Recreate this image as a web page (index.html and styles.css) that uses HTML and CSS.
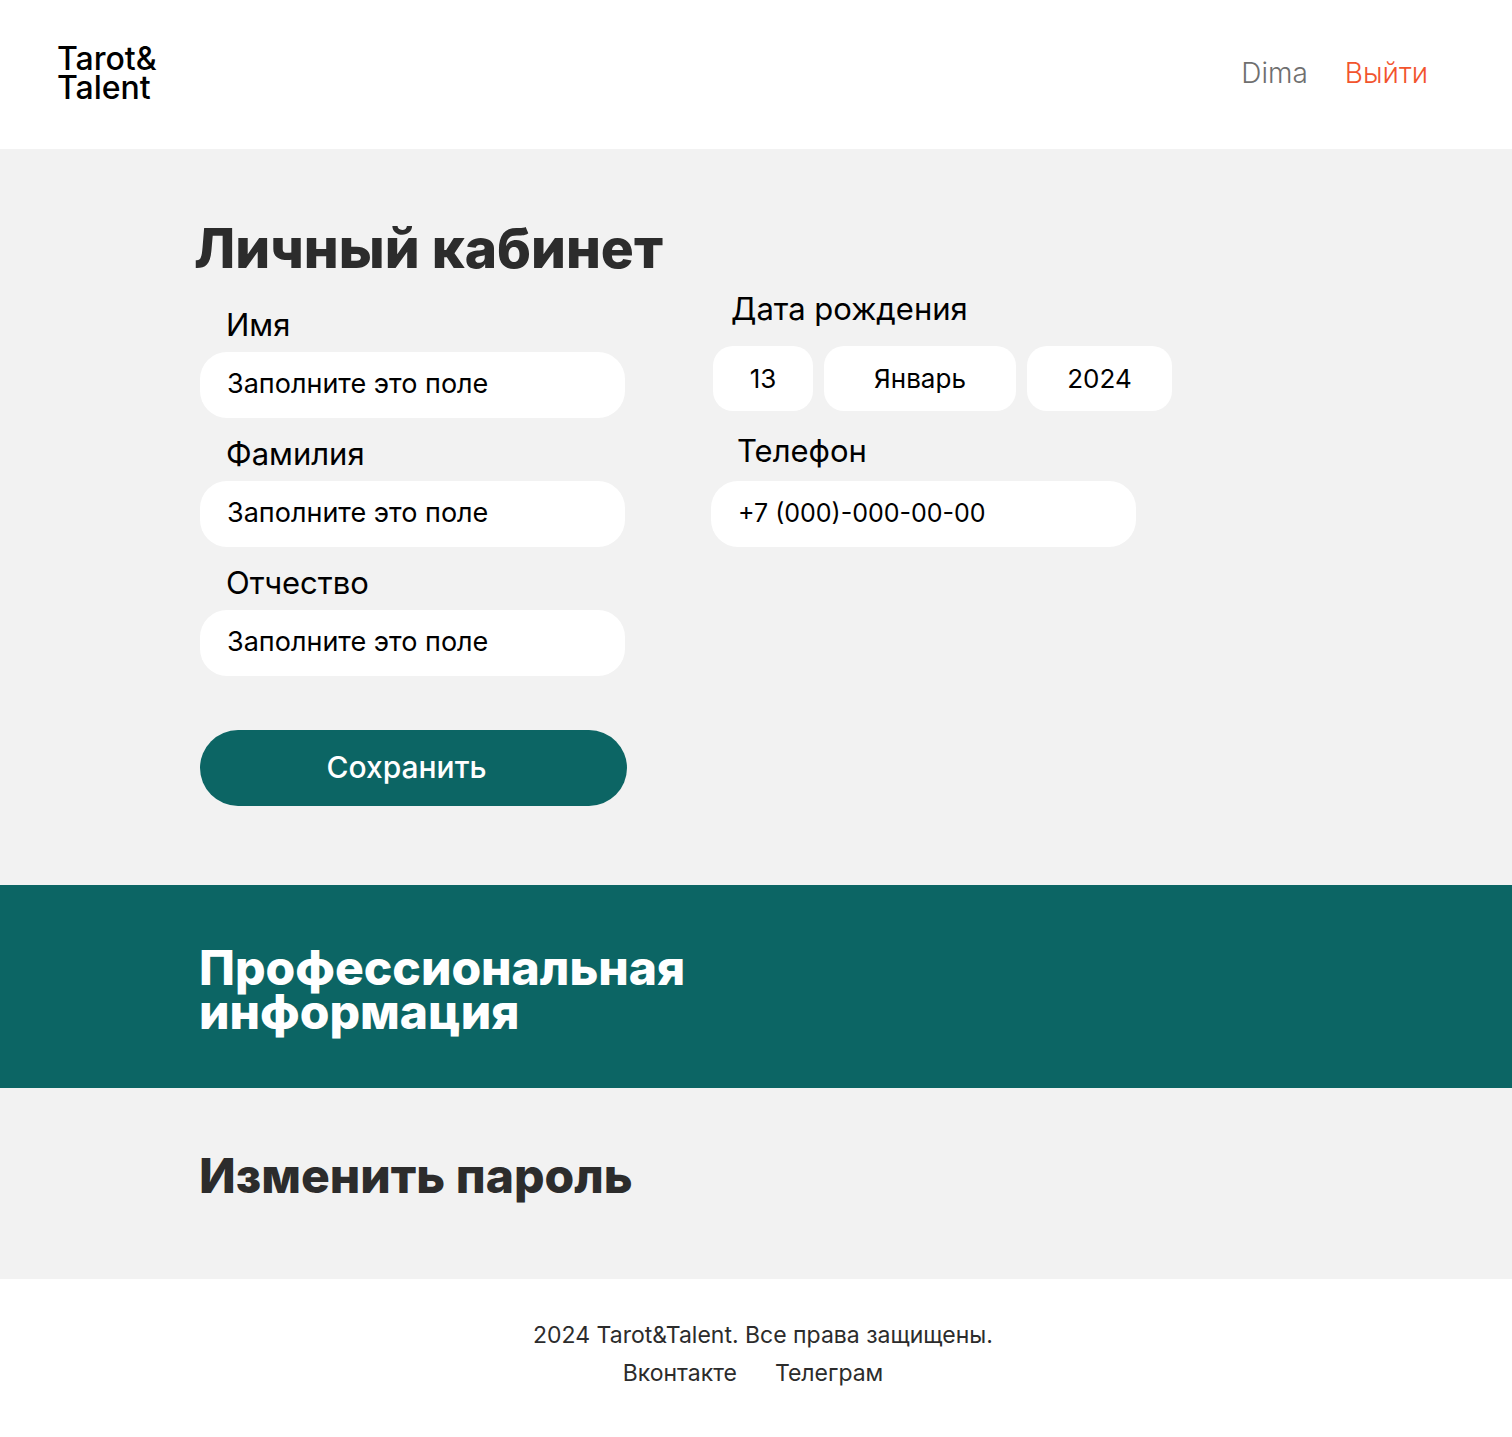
FILE: index.html
```html
<!DOCTYPE html>
<html lang="ru">
<head>
  <meta charset="utf-8">
  <meta name="viewport" content="width=device-width, initial-scale=1">
  <title>Личный кабинет</title>
  <link rel="stylesheet" href="styles.css">
</head>
<body>
  <header class="header">
    <a class="logo" href="#">Tarot&amp;<br>Talent</a>
    <nav class="nav">
      <a class="nav-user" href="#">Dima</a>
      <a class="nav-exit" href="#">Выйти</a>
    </nav>
  </header>

  <main>
    <section class="account">
      <h1 class="title">Личный кабинет</h1>
      <form class="form">
        <div class="names">
          <div class="field">
            <label class="label" for="name">Имя</label>
            <input class="input" id="name" type="text" placeholder="Заполните это поле">
          </div>
          <div class="field">
            <label class="label" for="surname">Фамилия</label>
            <input class="input" id="surname" type="text" placeholder="Заполните это поле">
          </div>
          <div class="field">
            <label class="label" for="patronymic">Отчество</label>
            <input class="input" id="patronymic" type="text" placeholder="Заполните это поле">
          </div>
          <button class="save" type="submit">Сохранить</button>
        </div>
        <div class="details">
          <div class="birth">
            <label class="label label-birth" for="day">Дата рождения</label>
            <div class="date">
              <select class="select day" id="day"><option>13</option></select>
              <select class="select month" aria-label="Месяц"><option>Январь</option></select>
              <select class="select year" aria-label="Год"><option>2024</option></select>
            </div>
          </div>
          <div class="field field-phone">
            <label class="label" for="phone">Телефон</label>
            <input class="input input-phone" id="phone" type="tel" placeholder="+7 (000)-000-00-00">
          </div>
        </div>
      </form>
    </section>

    <section class="professional">
      <h2 class="subtitle">Профессиональная<br>информация</h2>
    </section>

    <section class="password">
      <h2 class="subtitle">Изменить пароль</h2>
    </section>
  </main>

  <footer class="footer">
    <p class="copyright">2024 Tarot&amp;Talent. Все права защищены.</p>
    <div class="socials">
      <a href="#">Вконтакте</a>
      <a href="#">Телеграм</a>
    </div>
  </footer>
</body>
</html>
```
FILE: styles.css
```css
* {
  box-sizing: border-box;
}

body {
  margin: 0;
  background: #fff;
  color: #000;
  font-family: Inter, "Noto Sans", sans-serif;
  font-size: 27px;
}

a {
  color: inherit;
  text-decoration: none;
}

h1,
h2,
p {
  margin: 0;
}

.header {
  display: flex;
  align-items: center;
  justify-content: space-between;
  padding: 44px 84px 47px 57px;
}

.logo {
  font-size: 32px;
  font-weight: 500;
  line-height: 29px;
}

.nav {
  display: flex;
  gap: 37px;
  font-size: 28px;
  line-height: 32px;
}

.nav-user {
  color: #6f6f6f;
  font-weight: 300;
}

.nav-exit {
  color: #f2542d;
  font-weight: 300;
}

.account {
  padding: 69px 200px 79px;
  background: #f2f2f2;
}

.title {
  margin: 0 0 13px -6px;
  color: #2c2c2c;
  font-size: 55px;
  font-weight: 800;
  line-height: 60px;
}

.form {
  display: grid;
  grid-template-columns: minmax(0, 427px) minmax(0, 461px);
  gap: 84px;
}

.names {
  display: flex;
  flex-direction: column;
  gap: 18px;
  padding-top: 16px;
}

.field {
  display: flex;
  flex-direction: column;
  gap: 9px;
  max-width: 425px;
}

.label {
  padding-left: 26px;
  font-size: 31px;
  line-height: 36px;
}

.input,
.select {
  width: 100%;
  height: 66px;
  border: 0;
  background: #fff;
  color: #000;
  font: inherit;
}

.input {
  padding: 0 27px 3px;
  border-radius: 27px;
}

.input-phone {
  font-size: 25px;
}

.input::placeholder {
  color: #000;
  opacity: 1;
}

.save {
  width: 100%;
  height: 76px;
  margin-top: 36px;
  padding: 0 14px 2px 0;
  border: 0;
  border-radius: 38px;
  background: #0c6564;
  color: #fff;
  font: inherit;
  font-size: 30px;
  font-weight: 500;
}

.birth {
  display: flex;
  flex-direction: column;
  gap: 19px;
  padding-left: 2px;
}

.label-birth {
  padding-left: 18px;
}

.date {
  display: flex;
  gap: 11px;
}

.select {
  height: 65px;
  appearance: none;
  padding: 0;
  border-radius: 20px;
  font-size: 26px;
  text-align: center;
  text-align-last: center;
}

.day {
  flex: 0 1 100px;
}

.month {
  flex: 0 1 192px;
}

.year {
  flex: 0 1 145px;
}

.field-phone {
  gap: 12px;
  margin-top: 22px;
}

.subtitle {
  margin-left: -1px;
  font-size: 48px;
  font-weight: 800;
  line-height: 44px;
}

.professional {
  padding: 61px 200px 54px;
  background: #0c6564;
  color: #fff;
}

.password {
  padding: 66px 200px 81px;
  background: #f2f2f2;
  color: #2c2c2c;
}

.footer {
  padding: 37px 24px 45px;
  color: #2c2c2c;
  font-size: 23px;
  line-height: 38px;
  text-align: center;
}

.copyright {
  padding-left: 14px;
}

.socials {
  display: flex;
  justify-content: center;
  gap: 38px;
  padding-right: 6px;
}
```
